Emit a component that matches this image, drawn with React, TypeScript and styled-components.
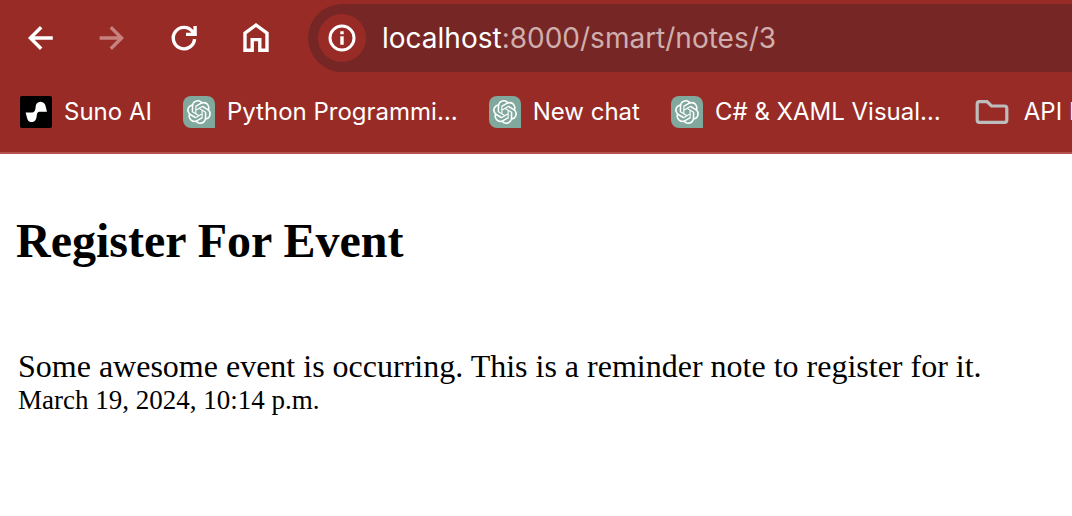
import React from "react";
import styled, { createGlobalStyle } from "styled-components";
import { SiOpenai } from "react-icons/si";

const GlobalStyle = createGlobalStyle`
  * { box-sizing: border-box; }
  body { margin: 0; background: #fff; overflow-x: hidden; }
`;

const Chrome = styled.header`
  background: #992b26;
  border-bottom: 2px solid #b4524f;
  font-family: Inter, "Liberation Sans", sans-serif;
  color: #fff;
  overflow: hidden;
`;

const Toolbar = styled.div`
  display: flex;
  align-items: center;
  padding: 4px 0 4px 4px;
`;

const Nav = styled.nav`
  display: flex;
  flex: none;
  margin-right: 16px;
`;

const NavButton = styled.button`
  display: flex;
  align-items: center;
  justify-content: center;
  width: 72px;
  height: 68px;
  padding: 0;
  border: 0;
  background: none;
  color: #fff;

  &:disabled {
    color: #c7827f;
  }
`;

const StrokeIcon = styled.svg`
  display: block;
  width: 36px;
  height: 36px;
  fill: none;
  stroke: currentColor;
  stroke-width: 3.4;
`;

const AddressBar = styled.div`
  display: flex;
  flex: 1;
  align-items: center;
  gap: 16px;
  height: 68px;
  padding-left: 10px;
  border-radius: 34px 0 0 34px;
  background: #762624;
`;

const InfoButton = styled.button`
  display: flex;
  align-items: center;
  justify-content: center;
  width: 48px;
  height: 48px;
  padding: 0;
  border: 0;
  border-radius: 50%;
  background: #992b26;
  color: #fff;
`;

const Address = styled.div`
  color: #d1aeae;
  font-size: 28px;
  line-height: 36px;
  white-space: nowrap;
  outline: none;
`;

const Host = styled.span`
  color: #fff;
`;

const Bookmarks = styled.ul`
  display: flex;
  gap: 31px;
  margin: 0;
  padding: 20px 0 24px 20px;
  list-style: none;
`;

const Bookmark = styled.a`
  display: flex;
  align-items: center;
  gap: 12px;
  color: #fff;
  font-size: 24px;
  line-height: 32px;
  text-decoration: none;
  white-space: nowrap;
`;

const ChatTile = styled.span`
  display: flex;
  align-items: center;
  justify-content: center;
  width: 32px;
  height: 32px;
  border-radius: 8px 8px 0 8px;
  background: #80a89d;
`;

const SunoTile = styled.svg`
  width: 32px;
  height: 32px;
`;

const FolderGlyph = styled.svg`
  width: 40px;
  height: 32px;
  fill: none;
  stroke: #bdbdbd;
  stroke-width: 3.2;
`;

const Page = styled.main`
  padding: 59px 16px 16px;
  color: #000;
  font-family: "Liberation Serif", "Times New Roman", serif;
`;

const Title = styled.h1`
  margin: 0 0 79px;
  font-size: 48px;
  line-height: 56px;
`;

const Note = styled.p`
  margin: 0;
  padding-left: 2px;
  font-size: 32px;
  line-height: 36px;
`;

const Posted = styled.time`
  display: block;
  padding-left: 2px;
  font-size: 27px;
  line-height: 32px;
`;

const ChatIcon = () => (
  <ChatTile>
    <SiOpenai size={24} aria-hidden />
  </ChatTile>
);

const SunoIcon = () => (
  <SunoTile viewBox="0 0 32 32" aria-hidden>
    <rect width="32" height="32" rx="2" fill="#000" />
    <path
      fill="#fff"
      d="M15.6 11C15.8 8 17.5 5.8 20.5 5.8S25.4 8 25.8 11L27 15.8H19.4C17.8 16 17 17 16.8 19C16.5 23.5 15 26 11.8 26S7.5 24 6.8 21L5.6 16.4H12.6C14.8 16 15.4 14 15.6 11Z"
    />
  </SunoTile>
);

const FolderIcon = () => (
  <FolderGlyph viewBox="0 0 40 32" aria-hidden>
    <path d="M7.5 5.6H15L19.5 10H32.5Q34.8 10 34.8 12.3V24Q34.8 26.4 32.5 26.4H7.5Q5.2 26.4 5.2 24V8Q5.2 5.6 7.5 5.6Z" />
  </FolderGlyph>
);

const bookmarks = [
  { label: "Suno AI", Icon: SunoIcon },
  { label: "Python Programmi…", Icon: ChatIcon },
  { label: "New chat", Icon: ChatIcon },
  { label: "C# & XAML Visual…", Icon: ChatIcon },
  { label: "API Docs", Icon: FolderIcon },
];

export default function App() {
  return (
    <>
      <GlobalStyle />
      <Chrome>
        <Toolbar>
          <Nav aria-label="Browser">
            <NavButton aria-label="Back">
              <StrokeIcon viewBox="0 0 36 36">
                <path d="M19.2 7.2L8.4 18L19.2 28.8M8.4 18H30.8" />
              </StrokeIcon>
            </NavButton>
            <NavButton aria-label="Forward" disabled>
              <StrokeIcon viewBox="0 0 36 36">
                <path d="M16.8 7.2L27.6 18L16.8 28.8M27.6 18H5.6" />
              </StrokeIcon>
            </NavButton>
            <NavButton aria-label="Reload">
              <StrokeIcon viewBox="0 0 36 36">
                <path d="M28.6 19.2A10.7 10.7 0 1 1 26.6 11.8L28.8 14.4M29.1 6V14.4H20" />
              </StrokeIcon>
            </NavButton>
            <NavButton aria-label="Home">
              <StrokeIcon viewBox="0 0 36 36">
                <path d="M7 30.2V13.2L18 5L29 13.2V30.2H21.8V19.6H14.2V30.2Z" />
              </StrokeIcon>
            </NavButton>
          </Nav>
          <AddressBar>
            <InfoButton aria-label="View site information">
              <StrokeIcon viewBox="0 0 36 36">
                <circle cx="18" cy="18" r="12" strokeWidth="3" />
                <path d="M18 16.2V24.8M18 11.2V14.2" />
              </StrokeIcon>
            </InfoButton>
            <Address role="textbox" aria-label="Address" tabIndex={0}>
              <Host>localhost</Host>:8000/smart/notes/3
            </Address>
          </AddressBar>
        </Toolbar>
        <Bookmarks>
          {bookmarks.map(({ label, Icon }) => (
            <li key={label}>
              <Bookmark href="#">
                <Icon />
                {label}
              </Bookmark>
            </li>
          ))}
        </Bookmarks>
      </Chrome>
      <Page>
        <Title>Register For Event</Title>
        <Note>Some awesome event is occurring. This is a reminder note to register for it.</Note>
        <Posted dateTime="2024-03-19T22:14">March 19, 2024, 10:14 p.m.</Posted>
      </Page>
    </>
  );
}
